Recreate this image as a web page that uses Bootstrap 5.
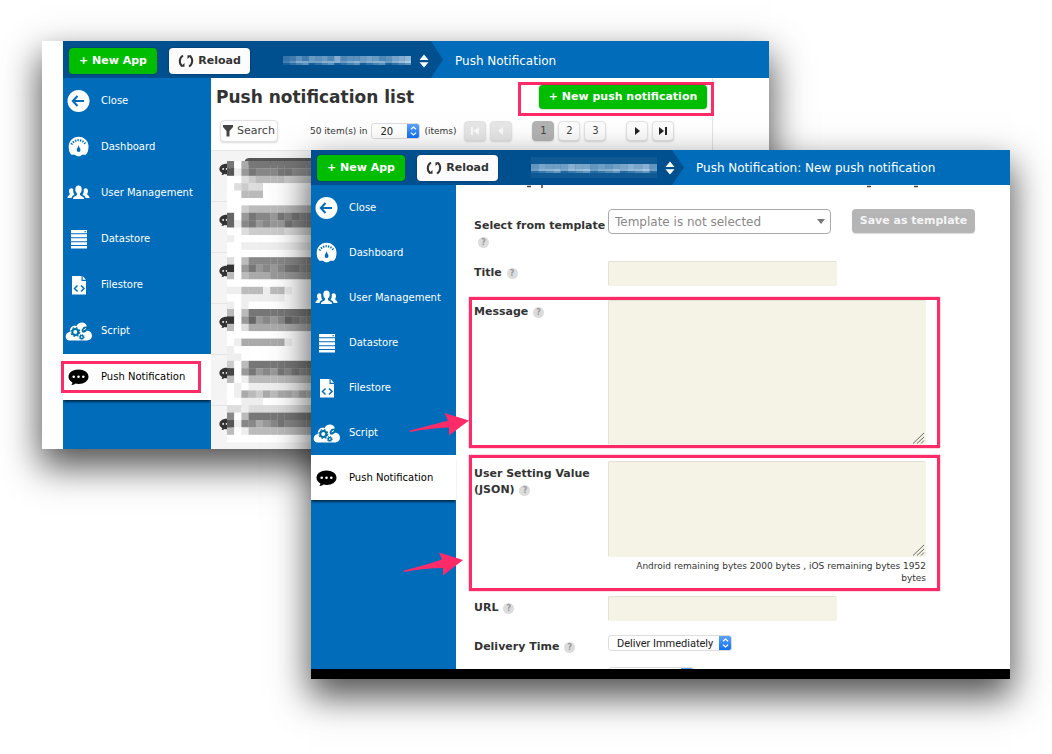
<!DOCTYPE html>
<html lang="en">
<head>
<meta charset="utf-8">
<meta name="viewport" content="width=device-width, initial-scale=1">
<title>Push Notification</title>
<link href="https://cdn.jsdelivr.net/npm/bootstrap@5.3.0/dist/css/bootstrap.min.css" rel="stylesheet">
<style>
  :root { --blue: #006cba; --navy: #00508f; --pink: #ff2b69; --green: #00bd00; --ink: #333; }
  body { font-family: "DejaVu Sans", Verdana, sans-serif; font-size: 10px; line-height: 16px; color: var(--ink); background: #fff; }
  .desk { min-height: 754px; }
  .win { background: #fff; box-shadow: 0 16px 34px 2px rgba(0,0,0,.68); }
  .win-back { top: 41px; left: 42px; right: 283px; padding-left: 21px; height: 408px; }
  .win-front { top: 150px; left: 311px; right: 42px; border-bottom: 10px solid #000; height: 529px; }

  .topbar { height: 37px; flex: none; background: var(--blue); color: #fff; font-size: 12px; }
  .win-back .topbar > * { padding-top: 2px; }
  .win-front .topbar { height: 35px; }
  .crumb-app { background: var(--navy); padding: 0 16px 0 6px; clip-path: polygon(0 0, calc(100% - 12px) 0, 100% 50%, calc(100% - 12px) 100%, 0 100%); width: 380px; }
  .win-front .crumb-app { width: 373px; }
  .tool { border: 0; border-radius: 4px; font-size: 11px; font-weight: 700; line-height: 16px; padding: 4px 0; box-shadow: 0 0 2px rgba(0,0,0,.45); }
  .topbar .tool { padding: 5px 0; flex: none; }
  .tool-green { background: var(--green); color: #fff; width: 88px; }
  .tool-white { background: #fcfcfc; color: var(--ink); width: 81px; margin-left: 12px; }
  .rule { width: 1px; height: 24px; background: #2c6ca0; margin: 0 19px 0 14px; }
  .switch { margin-left: 8px; flex: none; }
  .bar-mosaic { flex: none; }

  .side { width: 148px; background: var(--blue); }
  .win-front .side { width: 145px; }
  .side a { height: 46px; flex: none; color: #fff; text-decoration: none; padding-left: 1px; gap: 8px; }
  .win-front .side a { height: 45px; }
  .side a svg { width: 29px; height: 24px; }
  .side a.current { background: #fff; color: #000; box-shadow: 0 3px 2px -1px rgba(0,0,0,.6); }
  .ring { top: -1px; left: -2px; width: 140px; height: 32px; border: 3px solid var(--pink); }

  .list-pane { border-right: 1px solid #e4e4e4; width: 502px; height: 371px; overflow-x: visible; overflow-y: clip; }
  .list-head { width: 503px; }
  h1 { font-size: 17px; line-height: 24px; font-weight: 700; margin: 0; padding: 3px 0 0 5px; }
  .new-ring { border: 3px solid var(--pink); padding: 0 4px 4px 18px; }
  .new-ring .tool { width: 168px; }
  .mini { border: 1px solid #e2e2e2; border-radius: 4px; background: #fcfcfc; color: #444; font-size: 10px; line-height: 16px; width: 22px; height: 20px; padding: 0; box-shadow: 0 1px 2px rgba(0,0,0,.15); }
  .mini.idle { background: #e6e6e6; color: #fafafa; }
  .mini.on { background: #b3b3b3; border-color: #b3b3b3; }
  .tools-row { padding: 4px 0 8px 9px; }
  .search { width: 58px; height: 22px; font-size: 11px; }
  .tiny { font-size: 9px; line-height: 12px; }
  .stepper { appearance: none; border: 1px solid #ddd; border-radius: 3px; color: #222; height: 16px; line-height: 13px; padding: 0 0 0 8px;
    background: #fff url("data:image/svg+xml,%3Csvg xmlns='http://www.w3.org/2000/svg' width='13' height='16'%3E%3Cdefs%3E%3ClinearGradient id='g' x2='0' y2='1'%3E%3Cstop stop-color='%2362a8fb'/%3E%3Cstop offset='1' stop-color='%230a6cf5'/%3E%3C/linearGradient%3E%3C/defs%3E%3Cpath fill='url(%23g)' d='M0 0h10a3 3 0 0 1 3 3v10a3 3 0 0 1-3 3H0z'/%3E%3Cpath d='M4 6.3 6.500 4 9 6.3M4 9.7 6.500 12 9 9.7' fill='none' stroke='%23fff' stroke-width='1.2'/%3E%3C/svg%3E") no-repeat right center; background-origin: border-box; background-clip: border-box; }
  .count { width: 49px; font-size: 10px; }
  .when { width: 124px; font-family: Roboto, "Liberation Sans", Arial, sans-serif; font-size: 11px; }
  .brief { width: 86px; }
  .feed li { height: 51px; background: #f4f4f4; border-top: 1px solid #e6e6e6; padding: 10px 0 0 8px; }
  .mosaic { left: 16px; top: 7px; }

  .form-pane { padding-left: 13px; min-width: 0; }
  .field { display: grid; grid-template-columns: 134px 1fr; border: 3px solid transparent; padding-left: 2px; margin: 8px 70px 0 0; }
  .field.hot { border-color: var(--pink); box-shadow: 0 0 1px var(--pink); }
  .field > label { font-size: 11px; font-weight: 700; padding-top: 4px; }
  .field-tpl { margin: 18px 0 0; }
  .field-tpl > label { padding-top: 9px; white-space: nowrap; }
  .field-title { margin-top: 5px; }
  .field-json { margin-top: 7px; padding-top: 3px; padding-bottom: 3px; }
  .field.field-json > label { padding-top: 5px; }
  .field-url { margin-top: 2px; }
  .field-more { margin-top: 6px; }
  .q { display: inline-block; width: 11px; height: 11px; line-height: 11px; border-radius: 50%; background: #dcdcdc; color: #999; font-size: 8px; font-weight: 700; text-align: center; margin-left: 1px; }
  .field-tpl .q { margin-left: 4px; }
  .entry { background: #f5f3e6; border: 1px solid #e3e1d6; border-right-color: #f5f3e6; border-bottom-color: #f5f3e6; border-radius: 2px; display: block; height: 25px; width: 229px; padding: 2px 6px; font-size: 11px; }
  textarea.entry { width: 318px; resize: none; background: #f5f3e6 url("data:image/svg+xml,%3Csvg xmlns='http://www.w3.org/2000/svg' width='13' height='12'%3E%3Cpath d='M1 11.500 12 1M5 11.500 12 5M9 11.500 12 8.500' stroke='%23666' fill='none'/%3E%3C/svg%3E") no-repeat right bottom; }
  .entry.h-msg { height: 145px; }
  .entry.h-json { height: 96px; }
  .remain { width: 318px; padding: 3px 0 1px 12px; }
  .template { appearance: none; width: 223px; height: 25px; border: 1px solid #aaa; border-radius: 4px; color: #888; font-size: 12px; padding: 0 6px;
    background: #fff url("data:image/svg+xml,%3Csvg xmlns='http://www.w3.org/2000/svg' width='8' height='5'%3E%3Cpath d='M0 0h8L4 5z' fill='%23777'/%3E%3C/svg%3E") no-repeat right 5px center; }
  .tool-grey { background: #b5b5b5; color: #f4f4f4; width: 123px; margin-left: 21px; box-shadow: 0 1px 1px rgba(0,0,0,.15); }
  .pos-one { left: 97px; top: 262px; }
  .pos-two { left: 92px; top: 401px; }
</style>
</head>
<body>
<svg width="0" height="0" class="position-absolute" aria-hidden="true">
  <symbol id="i-close" viewBox="0 0 29 24"><circle cx="14.500" cy="12" r="11" fill="#fff"/><path d="M20 12H9.500M13.500 7 8.800 12l4.700 5" fill="none" stroke="#006cba" stroke-width="2"/></symbol>
  <symbol id="i-dash" viewBox="0 0 29 24"><path d="M4.800 13a9.900 9.900 0 1 1 19.600 0c0 2.500-.8 5-2.600 6.800-2 .2-3.400-.2-4.300.4-1 1.300-4.600 1.300-5.800 0-1-.6-2.500-.2-4.300-.4C5.500 18 4.800 15.500 4.800 13z" fill="#fff"/><path d="M7.500 9.500A8 8 0 0 1 21.700 9.500" fill="none" stroke="#006cba" stroke-width="2.200" stroke-dasharray="1.300 1.200"/><path d="M14.600 10c.3 2.300 1.900 3.300 1.900 5a1.900 1.900 0 0 1-3.800 0c0-1.700 1.600-2.700 1.900-5z" fill="#006cba"/></symbol>
  <symbol id="i-users" viewBox="0 0 29 24" fill="#fff"><ellipse cx="14.500" cy="8.500" rx="3.200" ry="4"/><path d="M13 11h3v2.700c.6 1.700 4 1.300 4 4.300H9c0-3 3.400-2.600 4-4.300z"/><path d="M9.300 8.200c-1.700-1.900-4.300-.8-4.300 1.800 0 1.600.6 2.200.8 3 0 1.700-2.300 1.300-2.300 4h4c.2-2.300 1.900-2.700 3-3.300-1-1.200-1.600-3.400-1.200-5.500zM19.700 8.200c1.700-1.900 4.300-.8 4.300 1.800 0 1.600-.6 2.200-.8 3 0 1.700 2.300 1.300 2.300 4h-4c-.2-2.300-1.900-2.700-3-3.300 1-1.200 1.600-3.400 1.200-5.500z"/></symbol>
  <symbol id="i-data" viewBox="0 0 29 24" fill="#fff"><path d="M7 3h16v3.300H7zM7 7.300h16v2.900H7zM7 11.300h16v2.900H7zM7 15.300h16v2.600H7zM7 19h16v2.500H7z"/><path d="M20.500 4h1.300v1.200h-1.300z" fill="#006cba"/></symbol>
  <symbol id="i-file" viewBox="0 0 29 24"><path d="M8 3h9.500v5H22v13.500H8z" fill="#fff"/><path d="M18.600 3 22 6.800h-3.400z" fill="#fff"/><path d="m13.500 12.500-3 3 3 3M17 12.500l3 3-3 3" fill="none" stroke="#006cba" stroke-width="1.500"/></symbol>
  <symbol id="i-script" viewBox="0 0 29 24"><path d="M5 21.500c-4.500-1-4.500-7.500.8-8.500C5.600 7.500 10 6 12.300 7.200c2.200-5 9.300-5.300 10.700.4.500 1.300.2 2.800-.2 3.800 3.500.4 5.200 2.500 5.200 5.200 0 2.700-2 4.900-4.800 4.900z" fill="#fff"/><g fill="none" stroke="#0070a8"><circle cx="11.300" cy="13" r="3" stroke-width="2"/><circle cx="11.300" cy="13" r="4.400" stroke-width="1.200" stroke-dasharray="1.730"/><circle cx="17.700" cy="18" r="1.600" stroke-width="1.500"/><circle cx="17.700" cy="18" r="2.600" stroke-width=".9" stroke-dasharray="1.020"/></g><path d="m17.500 11 2-3 3-.5 1-1.500.8 2-.5 3-3 2.500h-2.500z" fill="#0070a8"/><path d="m19.500 11 2.500-1.500" stroke="#fff"/></symbol>
  <symbol id="i-push" viewBox="0 0 29 24"><path d="M14.500 4.500c5.600 0 10 3 10 7.200s-4.400 7.200-10 7.200c-1.100 0-1.900 0-2.800-.3-1.200 1.100-3 1.500-4.300 1.300.7-.7 1-1.600 1-2.500-2.400-1.400-3.900-3.300-3.900-5.700 0-4.200 4.400-7.200 10-7.200z"/><g fill="#fff"><circle cx="9.700" cy="11.700" r="1.300"/><circle cx="14.500" cy="11.700" r="1.300"/><circle cx="19.300" cy="11.700" r="1.300"/></g></symbol>
  <symbol id="i-reload" viewBox="0 0 16 14"><path d="M5 1.500C.9 4 .9 9.500 4 12M11 12.500c4.100-2.500 4.100-8 1-10.500" fill="none" stroke="#333" stroke-width="2"/><path d="M2.500 12.800h4V9zM13.500 1.200h-4V5z" fill="#333"/></symbol>
  <symbol id="i-updown" viewBox="0 0 10 14"><path d="M.5 6 5 .5 9.500 6zM.5 8.300 5 13.500l4.500-5.200z" fill="#fff"/></symbol>
</svg>

<main class="desk position-relative overflow-hidden">

  <section class="win win-back position-absolute d-flex flex-column">
    <header class="topbar d-flex align-items-center gap-2">
      <div class="crumb-app d-flex align-items-center h-100 flex-shrink-0">
        <button class="tool tool-green" type="button">+ New App</button>
        <button class="tool tool-white d-flex align-items-center justify-content-center gap-1" type="button"><svg width="16" height="14"><use href="#i-reload"/></svg>Reload</button>
        <span class="rule"></span>
        <svg class="bar-mosaic" width="128" height="13" data-cells="45758786a677898679ab"></svg>
        <svg class="switch" width="10" height="14"><use href="#i-updown"/></svg>
      </div>
      <span class="ps-1 text-nowrap">Push Notification</span>
    </header>
    <div class="d-flex flex-grow-1">
      <nav class="side flex-shrink-0 d-flex flex-column">
        <a href="#" class="d-flex align-items-center"><svg><use href="#i-close"/></svg>Close</a>
        <a href="#" class="d-flex align-items-center"><svg><use href="#i-dash"/></svg>Dashboard</a>
        <a href="#" class="d-flex align-items-center"><svg><use href="#i-users"/></svg>User Management</a>
        <a href="#" class="d-flex align-items-center"><svg><use href="#i-data"/></svg>Datastore</a>
        <a href="#" class="d-flex align-items-center"><svg><use href="#i-file"/></svg>Filestore</a>
        <a href="#" class="d-flex align-items-center"><svg><use href="#i-script"/></svg>Script</a>
        <a href="#" class="current d-flex align-items-center position-relative"><svg><use href="#i-push"/></svg>Push Notification<span class="ring position-absolute mt-2"></span></a>
      </nav>
      <div class="list-pane flex-shrink-0">
        <div class="list-head d-flex justify-content-between align-items-start pt-1">
          <h1>Push notification list</h1>
          <div class="new-ring"><button class="tool tool-green" type="button">+ New push notification</button></div>
        </div>
        <div class="tools-row d-flex align-items-center">
          <button class="mini search d-flex align-items-center justify-content-center gap-1" type="button"><svg width="10" height="12"><path d="M0 0h10v2L6.500 6v5.500h-3V6L0 2z" fill="#444"/></svg>Search</button>
          <label class="tiny text-nowrap ps-4 ms-2 me-1" for="per-page">50 item(s) in</label>
          <select id="per-page" class="stepper count"><option>20</option></select>
          <span class="tiny ms-1 me-2">(items)</span>
          <div class="d-flex gap-1">
            <button class="mini idle" type="button" aria-label="First"><svg width="10" height="10"><path d="M1 1h2v8H1zM9 1v8L3 5z" fill="currentColor"/></svg></button>
            <button class="mini idle" type="button" aria-label="Previous"><svg width="10" height="10"><path d="M7 1v8L2 5z" fill="currentColor"/></svg></button>
            <button class="mini on ms-3" type="button">1</button>
            <button class="mini" type="button">2</button>
            <button class="mini me-3" type="button">3</button>
            <button class="mini" type="button" aria-label="Next"><svg width="10" height="10"><path d="M3 1v8l5-4z" fill="#222"/></svg></button>
            <button class="mini" type="button" aria-label="Last"><svg width="10" height="10"><path d="M1 1v8l5-4zM7 1h2v8H7z" fill="#222"/></svg></button>
          </div>
        </div>
        <div class="position-relative overflow-hidden">
          <ul class="feed list-unstyled mb-0" id="feed"></ul>
          <svg class="mosaic position-absolute" id="mosaic" width="100" height="290"></svg>
        </div>
      </div>
    </div>
  </section>

  <section class="win win-front position-absolute d-flex flex-column">
    <header class="topbar d-flex align-items-center gap-2">
      <div class="crumb-app d-flex align-items-center h-100 flex-shrink-0">
        <button class="tool tool-green" type="button">+ New App</button>
        <button class="tool tool-white d-flex align-items-center justify-content-center gap-1" type="button"><svg width="16" height="14"><use href="#i-reload"/></svg>Reload</button>
        <span class="rule"></span>
        <svg class="bar-mosaic" width="126" height="21" data-cells="79888a9978789a9a7" data-haze="1"></svg>
        <svg class="switch" width="10" height="14"><use href="#i-updown"/></svg>
      </div>
      <span class="ps-1 text-nowrap">Push Notification: New push notification</span>
    </header>
    <div class="d-flex flex-grow-1 overflow-hidden">
      <nav class="side flex-shrink-0 d-flex flex-column">
        <a href="#" class="d-flex align-items-center"><svg><use href="#i-close"/></svg>Close</a>
        <a href="#" class="d-flex align-items-center"><svg><use href="#i-dash"/></svg>Dashboard</a>
        <a href="#" class="d-flex align-items-center"><svg><use href="#i-users"/></svg>User Management</a>
        <a href="#" class="d-flex align-items-center"><svg><use href="#i-data"/></svg>Datastore</a>
        <a href="#" class="d-flex align-items-center"><svg><use href="#i-file"/></svg>Filestore</a>
        <a href="#" class="d-flex align-items-center"><svg><use href="#i-script"/></svg>Script</a>
        <a href="#" class="current d-flex align-items-center"><svg><use href="#i-push"/></svg>Push Notification</a>
      </nav>
      <form class="form-pane flex-grow-1">
        <svg class="d-block" width="480" height="3"><path d="M58 1.500h4M73 0v3M398 1.500h4M445 1.500h4" stroke="#444" stroke-width="1.500"/></svg>
        <div class="field field-tpl">
          <label for="tpl">Select from template<br><span class="q">?</span></label>
          <div class="d-flex align-items-start"><select id="tpl" class="template"><option>Template is not selected</option></select><button class="tool tool-grey" type="button">Save as template</button></div>
        </div>
        <div class="field field-title"><label for="ttl">Title <span class="q">?</span></label><div><input id="ttl" class="entry" type="text"></div></div>
        <div class="field hot"><label for="msg">Message <span class="q">?</span></label><div><textarea id="msg" class="entry h-msg"></textarea></div></div>
        <div class="field hot field-json"><label for="json">User Setting Value<br>(JSON) <span class="q">?</span></label><div><textarea id="json" class="entry h-json"></textarea><div class="tiny text-end remain">Android remaining bytes 2000 bytes , iOS remaining bytes 1952 bytes</div></div></div>
        <div class="field field-url"><label for="url">URL <span class="q">?</span></label><div><input id="url" class="entry" type="text"></div></div>
        <div class="field"><label for="when">Delivery Time <span class="q">?</span></label><div><select id="when" class="stepper when d-block"><option>Deliver Immediately</option></select></div></div>
        <div class="field field-more"><span></span><div><select class="stepper brief d-block" aria-label="Delivery option"></select></div></div>
      </form>
    </div>
    <svg class="pos-one position-absolute" width="64" height="28"><path d="M2 18.500Q24 13 40 8.500L36.500 1 61 8.500 41 23.500V15.500Q22 16 2 20z" fill="#ff2b69"/></svg>
    <svg class="pos-two position-absolute" width="64" height="28"><path d="M1 19.500Q23 14 39 8.500L36 1.500 60 9 40 24.500V17Q22 17 1 21z" fill="#ff2b69"/></svg>
  </section>
</main>

<script>
  // Redacted list text, one hex digit of grey per cell.
  const rows = [
    "7fa777777777", "5e9788877888", "ffdcbbbbcccc", "fdcddfffffff", "ffbbbfffffff", "ffffffffffff", "ffcbbbbbbbbb",
    "6f9788978788", "6e8798997888", "ffdcccccdddd", "efffffffffff", "ffeeeeeeeeee", "ffffffffffff", "dfb888888888",
    "3f9798987788", "bfbaaa999999", "ffffffffffff", "eebbbebbefff", "ffeeeeeeffff", "efefffffffff", "bfb777777777",
    "3f9698986788", "bfdaaaaaaaaa", "ffffffffffff", "feaaaaaaefff", "efffffffffff", "eeffffffffff", "cfb777777777",
    "4f9798978788", "bfebbbbbbbbb", "fefeeeeeeeee", "feabcabaabab", "ffeeefffffff", "ddeddddddddd", "8fb777777777",
    "5e88a9878888", "bfebbbbbbbbb", "ffffffffffff"];
  const rect = (x, y, w, h, f, o = 1) => `<rect x="${x}" y="${y}" width="${w}" height="${h}" fill="${f}" fill-opacity="${o}"/>`;
  let art = '<path d="M17 8q0-7 5-7h78v7z" fill="#555"/>';
  rows.forEach((r, y) => [...r].forEach((c, x) => art += rect(x * 7.2, 4 + y * 7.4, 7.4, 7.6, `#${c}${c}${c}`)));
  document.getElementById("mosaic").innerHTML = art;
  document.getElementById("feed").innerHTML = '<li><svg width="16" height="13" viewBox="4 4 22 17" fill="#333"><use href="#i-push" width="29" height="24"/></svg></li>'.repeat(6);
  document.querySelectorAll(".bar-mosaic").forEach(s => {
    const cells = [...s.dataset.cells], w = s.width.baseVal.value / cells.length, haze = s.dataset.haze, top = haze ? 7 : 2;
    s.innerHTML = (haze ? rect(0, 0, 126, 21, "#fff", .06) : "") + cells.map((c, i) =>
      rect(i * w, top, w, 7, "#cfe3f5", (parseInt(c, 16) / 16).toFixed(2)) + rect(i * w, top + 5, w, 4, "#cfe3f5", (i % 4 + 1) / 9)).join("");
  });
</script>
<script src="https://cdn.jsdelivr.net/npm/bootstrap@5.3.0/dist/js/bootstrap.bundle.min.js"></script>
</body>
</html>
